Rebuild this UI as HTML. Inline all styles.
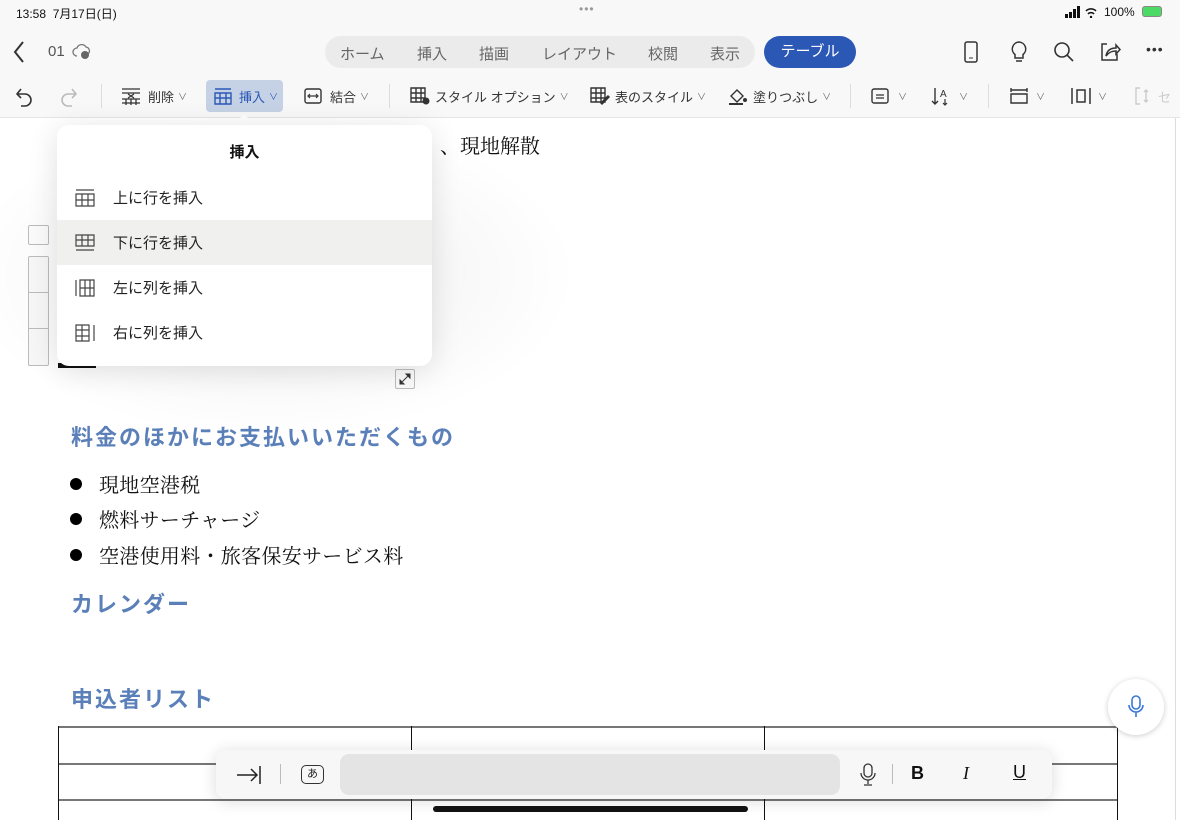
<!DOCTYPE html>
<html><head><meta charset="utf-8"><style>
*{margin:0;padding:0;box-sizing:border-box}
body{width:1180px;height:820px;overflow:hidden;position:relative;background:#fff;font-family:"Liberation Sans","Noto Sans CJK JP",sans-serif;color:#222}
.a{position:absolute}
.tb{font-size:13px;color:#333;display:flex;align-items:center}
.chev{font-size:9px;color:#666;margin-left:4px}
.sep{position:absolute;top:84px;width:1px;height:24px;background:#ddd}
.h{position:absolute;left:71px;font-size:22px;font-weight:bold;color:#5b80b9;letter-spacing:2px}
.li{position:absolute;left:70px;font-family:"Liberation Serif","Noto Serif CJK JP",serif;font-size:20px;color:#111;letter-spacing:0.3px}
.li b{display:inline-block;width:12px;height:12px;border-radius:50%;background:#000;margin-right:17px;vertical-align:2px}
.item{position:absolute;left:0;width:375px;height:45px;display:flex;align-items:center;font-size:15px;color:#222}
.item svg{margin:0 18px 0 18px}
</style></head><body>
<div class="a" style="left:0;top:0;width:1180px;height:118px;background:#f8f8f8"></div>
<div class="a" style="left:0;top:117px;width:1180px;height:1px;background:#e6e6e6"></div>
<div class="a" style="left:-40px;top:110px;width:620px;height:330px;border-radius:50%;background:radial-gradient(ellipse at center,rgba(0,0,0,0.07),rgba(0,0,0,0) 70%)"></div>
<div class="a" style="left:16px;top:5px;font-size:12px;color:#111">13:58&nbsp;&nbsp;7月17日(日)</div>
<div class="a" style="left:579px;top:2px;font-size:12px;color:#999;letter-spacing:1px">•••</div>
<svg class="a" style="left:1065px;top:6px" width="36" height="12"><rect x="0" y="8" width="3" height="4" fill="#111"/><rect x="4" y="6" width="3" height="6" fill="#111"/><rect x="8" y="3" width="3" height="9" fill="#111"/><rect x="12" y="0" width="3" height="12" fill="#111"/><path d="M21 5a7 7 0 0 1 10 0M23 8a4 4 0 0 1 6 0" stroke="#111" stroke-width="1.5" fill="none"/><circle cx="26" cy="11" r="1.2" fill="#111"/></svg>
<div class="a" style="left:1104px;top:5px;font-size:12px;color:#111">100%</div>
<div class="a" style="left:1142px;top:6px;width:20px;height:11px;border:1px solid #888;border-radius:3px;background:#4cd964"></div>
<svg class="a" style="left:12px;top:40px" width="14" height="24"><path d="M11 2 L3 12 L11 22" stroke="#333" stroke-width="2" fill="none"/></svg>
<div class="a" style="left:48px;top:43px;font-size:15px;color:#555">01</div>
<svg class="a" style="left:72px;top:42px" width="20" height="18"><path d="M5 14 A4 4 0 0 1 5 6 A5 5 0 0 1 14 5 A4 4 0 0 1 16 12" stroke="#777" stroke-width="1.3" fill="none"/><circle cx="13" cy="13" r="4" fill="#666"/></svg>
<div class="a" style="left:325px;top:36px;width:430px;height:32px;border-radius:16px;background:#ebebeb"></div>
<div class="a" style="left:340px;top:43px;font-size:15px;color:#666">ホーム</div>
<div class="a" style="left:417px;top:43px;font-size:15px;color:#666">挿入</div>
<div class="a" style="left:479px;top:43px;font-size:15px;color:#666">描画</div>
<div class="a" style="left:542px;top:43px;font-size:15px;color:#666">レイアウト</div>
<div class="a" style="left:648px;top:43px;font-size:15px;color:#666">校閲</div>
<div class="a" style="left:710px;top:43px;font-size:15px;color:#666">表示</div>
<div class="a" style="left:764px;top:36px;width:92px;height:32px;border-radius:16px;background:#2b57b5;color:#fff;font-size:15px;text-align:center;line-height:32px">テーブル</div>
<svg class="a" style="left:960px;top:40px" width="22" height="24"><rect x="5" y="2" width="12" height="20" rx="2" stroke="#333" stroke-width="1.5" fill="none"/><path d="M9 18h4" stroke="#333"/></svg>
<svg class="a" style="left:1008px;top:40px" width="22" height="24"><path d="M11 2a7 7 0 0 0-4 12.5V18h8v-3.5A7 7 0 0 0 11 2zM8 21h6" stroke="#333" stroke-width="1.5" fill="none"/></svg>
<svg class="a" style="left:1053px;top:40px" width="22" height="24"><circle cx="9" cy="10" r="7" stroke="#333" stroke-width="1.6" fill="none"/><path d="M14 15l6 6" stroke="#333" stroke-width="1.6"/></svg>
<svg class="a" style="left:1098px;top:40px" width="24" height="24"><path d="M9 4H4v16h15v-6" stroke="#333" stroke-width="1.5" fill="none"/><path d="M8 16c1-6 5-8 10-8V5l4 4.5L18 14v-3c-4 0-7 1-10 5z" stroke="#333" stroke-width="1.5" fill="none"/></svg>
<div class="a" style="left:1146px;top:41px;font-size:14px;color:#333;letter-spacing:1px">•••</div>
<svg class="a" style="left:12px;top:84px" width="24" height="24"><path d="M9 5L5 10l4 4M5 10h8a6 6 0 0 1 0 12H9" stroke="#333" stroke-width="1.6" fill="none"/></svg>
<svg class="a" style="left:57px;top:84px" width="24" height="24"><path d="M15 5l4 5-4 4M19 10h-8a6 6 0 0 0 0 12h4" stroke="#bbb" stroke-width="1.6" fill="none"/></svg>
<div class="sep" style="left:101px"></div>
<div class="a tb" style="left:120px;top:86px"><svg width="22" height="20"><path d="M2 3h18M2 7h18M2 13h18M2 17h18M6 13v6M11 13v6M16 13v6M8 8l6 4M14 8l-6 4" stroke="#333" stroke-width="1.3" fill="none"/></svg><span style="margin-left:6px">削除</span><span class="chev">∨</span></div>
<div class="a" style="left:206px;top:80px;width:77px;height:32px;border-radius:4px;background:#c5d2e6"></div>
<div class="a tb" style="left:213px;top:86px;color:#2b57b5"><svg width="20" height="20"><path d="M2 3h16M2 7h16v11H2zM2 12h16M7 7v11M13 7v11" stroke="#2b57b5" stroke-width="1.4" fill="none"/></svg><span style="margin-left:6px">挿入</span><span class="chev" style="color:#2b57b5">∨</span></div>
<div class="a" style="left:236px;top:114px;width:0;height:0;border-left:8px solid transparent;border-right:8px solid transparent;border-bottom:8px solid #fff"></div>
<div class="a tb" style="left:303px;top:86px"><svg width="20" height="20"><rect x="2" y="3" width="16" height="14" rx="2" stroke="#333" stroke-width="1.4" fill="none"/><path d="M5 10h10M7 8l-2 2 2 2M13 8l2 2-2 2" stroke="#333" stroke-width="1.2" fill="none"/></svg><span style="margin-left:7px">結合</span><span class="chev">∨</span></div>
<div class="sep" style="left:389px"></div>
<div class="a tb" style="left:409px;top:86px"><svg width="22" height="20"><path d="M2 2h14v14H2zM2 7h14M2 12h14M7 2v14M12 2v14" stroke="#333" stroke-width="1.4" fill="none"/><circle cx="17" cy="15" r="3.5" fill="#333"/></svg><span style="margin-left:4px">スタイル オプション</span><span class="chev">∨</span></div>
<div class="a tb" style="left:589px;top:86px"><svg width="22" height="20"><path d="M2 2h14v14H2zM2 7h14M2 12h14M7 2v14M12 2v14" stroke="#333" stroke-width="1.4" fill="none"/><path d="M12 18l8-8" stroke="#333" stroke-width="3"/></svg><span style="margin-left:4px">表のスタイル</span><span class="chev">∨</span></div>
<div class="a tb" style="left:727px;top:86px"><svg width="22" height="20"><path d="M4 10l6-6 6 6-6 6z" stroke="#333" stroke-width="1.4" fill="none"/><path d="M2 18h14" stroke="#333" stroke-width="2"/><circle cx="18" cy="14" r="2" fill="#333"/></svg><span style="margin-left:4px">塗りつぶし</span><span class="chev">∨</span></div>
<div class="sep" style="left:850px"></div>
<div class="a tb" style="left:870px;top:86px"><svg width="20" height="20"><rect x="2" y="3" width="16" height="14" rx="2" stroke="#333" stroke-width="1.4" fill="none"/><path d="M6 9h8M6 12h8" stroke="#333" stroke-width="1.3"/></svg><span class="chev" style="margin-left:8px">∨</span></div>
<div class="a tb" style="left:931px;top:86px"><svg width="22" height="20"><path d="M4 2v16M1 15l3 3 3-3" stroke="#333" stroke-width="1.4" fill="none"/><text x="9" y="11" font-size="10" fill="#333" font-family="Liberation Sans">A</text><path d="M14 13v6M12 17l2 2 2-2" stroke="#333" stroke-width="1.2" fill="none"/></svg><span class="chev" style="margin-left:6px">∨</span></div>
<div class="sep" style="left:988px"></div>
<div class="a tb" style="left:1008px;top:86px"><svg width="22" height="20"><path d="M3 2v4M19 2v4M3 4h16M3 8h16v9H3z" stroke="#333" stroke-width="1.4" fill="none"/></svg><span class="chev" style="margin-left:6px">∨</span></div>
<div class="a tb" style="left:1070px;top:86px"><svg width="22" height="20"><path d="M2 2v16M20 2v16M7 4h8v12H7z" stroke="#333" stroke-width="1.5" fill="none"/></svg><span class="chev" style="margin-left:6px">∨</span></div>
<div class="a tb" style="left:1134px;top:86px;color:#ccc"><svg width="20" height="20"><path d="M6 2H2v16h4M12 4v12M10 6l2-2 2 2M10 14l2 2 2-2" stroke="#ccc" stroke-width="1.4" fill="none"/></svg><span style="margin-left:4px">セ</span></div>
<div class="a" style="left:1175px;top:118px;width:1px;height:702px;background:#ddd"></div>
<div class="a" style="left:440px;top:130px;font-family:'Liberation Serif','Noto Serif CJK JP',serif;font-size:20px;color:#111">、現地解散</div>
<div class="a" style="left:28px;top:225px;width:21px;height:20px;border:1px solid #bbb;border-radius:2px;background:#fafafa"></div>
<div class="a" style="left:28px;top:256px;width:21px;height:110px;border:1px solid #bbb;border-radius:2px;background:#f6f6f6"></div>
<div class="a" style="left:28px;top:292px;width:21px;height:1px;background:#bbb"></div>
<div class="a" style="left:28px;top:328px;width:21px;height:1px;background:#bbb"></div>
<div class="a" style="left:58px;top:363px;width:38px;height:5px;background:#111"></div>
<div class="a" style="left:395px;top:369px;width:20px;height:20px;border:1px solid #bbb;border-radius:2px;background:#fafafa"><svg width="18" height="18"><path d="M4 14V10l4 4zM14 4v4l-4-4zM5 13l8-8" fill="#333" stroke="#333"/></svg></div>
<div class="a" style="left:57px;top:125px;width:375px;height:241px;background:#fff;border-radius:12px;box-shadow:0 4px 30px rgba(0,0,0,0.12);overflow:hidden">
 <div class="a" style="left:0;top:16px;width:375px;text-align:center;font-size:15px;font-weight:bold;color:#111">挿入</div>
 <div class="item" style="top:50px"><svg width="20" height="18"><path d="M1 1h18M1 5h18v12H1zM1 11h18M7 5v12M13 5v12" stroke="#444" stroke-width="1.2" fill="none"/></svg>上に行を挿入</div>
 <div class="item" style="top:95px;background:#f0f0ef"><svg width="20" height="18"><path d="M1 1h18v11H1zM1 6h18M7 1v11M13 1v11M1 16h18" stroke="#444" stroke-width="1.2" fill="none"/></svg>下に行を挿入</div>
 <div class="item" style="top:140px"><svg width="20" height="18"><path d="M1 1v16M5 1h14v16H5zM5 9h14M10 1v16M15 1v16" stroke="#444" stroke-width="1.2" fill="none"/></svg>左に列を挿入</div>
 <div class="item" style="top:185px"><svg width="20" height="18"><path d="M1 1h13v16H1zM1 6h13M1 12h13M7 1v16M19 1v16" stroke="#444" stroke-width="1.2" fill="none"/></svg>右に列を挿入</div>
</div>
<div class="h" style="top:420px">料金のほかにお支払いいただくもの</div>
<div class="li" style="top:469px"><b></b>現地空港税</div>
<div class="li" style="top:504px"><b></b>燃料サーチャージ</div>
<div class="li" style="top:540px"><b></b>空港使用料・旅客保安サービス料</div>
<div class="h" style="top:587px">カレンダー</div>
<div class="h" style="top:682px">申込者リスト</div>
<div class="a" style="left:58px;top:726px;width:1060px;height:2px;background:#777"></div>
<div class="a" style="left:58px;top:763px;width:1060px;height:2px;background:#777"></div>
<div class="a" style="left:58px;top:799px;width:1060px;height:2px;background:#777"></div>
<div class="a" style="left:58px;top:726px;width:1px;height:94px;background:#111"></div>
<div class="a" style="left:411px;top:726px;width:1px;height:94px;background:#111"></div>
<div class="a" style="left:764px;top:726px;width:1px;height:94px;background:#111"></div>
<div class="a" style="left:1117px;top:726px;width:1px;height:94px;background:#111"></div>
<div class="a" style="left:1108px;top:679px;width:56px;height:56px;border-radius:50%;background:#fff;box-shadow:0 1px 6px rgba(0,0,0,0.2)"><svg style="position:absolute;left:19px;top:15px" width="18" height="26"><rect x="5" y="2" width="8" height="13" rx="4" stroke="#3a78d8" stroke-width="1.6" fill="none"/><path d="M2 11a7 7 0 0 0 14 0M9 18v5" stroke="#3a78d8" stroke-width="1.6" fill="none"/></svg></div>
<div class="a" style="left:216px;top:750px;width:836px;height:49px;border-radius:10px;background:#f7f7f7;box-shadow:0 2px 16px rgba(0,0,0,0.15)">
 <svg class="a" style="left:20px;top:14px" width="26" height="22"><path d="M1 11h20M15 5l6 6-6 6M24 2v18" stroke="#222" stroke-width="1.5" fill="none"/></svg>
 <div class="a" style="left:64px;top:14px;width:1px;height:20px;background:#bbb"></div>
 <div class="a" style="left:85px;top:15px;width:23px;height:19px;border:1.3px solid #333;border-radius:5px;font-size:11px;text-align:center;line-height:16px">あ</div>
 <div class="a" style="left:124px;top:4px;width:500px;height:41px;border-radius:9px;background:#e4e4e5"></div>
 <svg class="a" style="left:643px;top:13px" width="18" height="24"><rect x="5" y="1" width="8" height="13" rx="4" stroke="#333" stroke-width="1.3" fill="none"/><path d="M2 10a7 7 0 0 0 14 0M9 17v4M5 22h8" stroke="#333" stroke-width="1.3" fill="none"/></svg>
 <div class="a" style="left:676px;top:14px;width:1px;height:20px;background:#bbb"></div>
 <div class="a" style="left:695px;top:13px;font-size:18px;font-weight:bold;color:#111">B</div>
 <div class="a" style="left:747px;top:13px;font-size:18px;font-style:italic;font-family:'Liberation Serif',serif;color:#111">I</div>
 <div class="a" style="left:797px;top:12px;font-size:18px;text-decoration:underline;color:#111">U</div>
</div>
<div class="a" style="left:433px;top:806px;width:315px;height:6px;border-radius:3px;background:#111"></div>
</body></html>
